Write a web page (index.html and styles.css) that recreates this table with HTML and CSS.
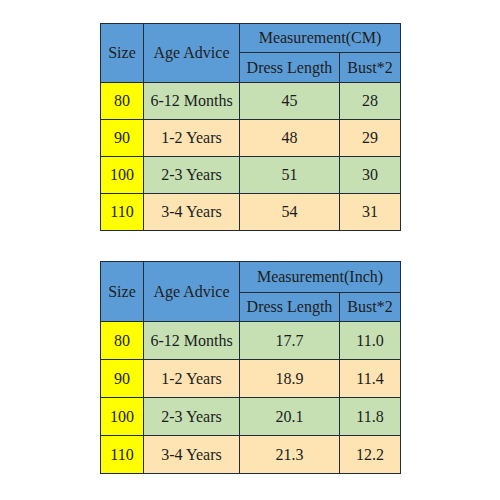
FILE: index.html
```html
<!DOCTYPE html>
<html lang="en">
<head>
    <meta charset="UTF-8">
    <title>Size Chart</title>
    <link rel="stylesheet" href="styles.css">
</head>
<body>
    <div class="page">
        <table class="size-table cm">
            <colgroup>
                <col class="c-size"><col class="c-age"><col class="c-len"><col class="c-bust">
            </colgroup>
            <tr class="head-top">
                <th rowspan="2">Size</th>
                <th rowspan="2">Age Advice</th>
                <th colspan="2">Measurement(CM)</th>
            </tr>
            <tr class="head-sub">
                <th>Dress Length</th>
                <th>Bust*2</th>
            </tr>
            <tr class="green"><td class="size">80</td><td>6-12 Months</td><td>45</td><td>28</td></tr>
            <tr class="peach"><td class="size">90</td><td>1-2 Years</td><td>48</td><td>29</td></tr>
            <tr class="green"><td class="size">100</td><td>2-3 Years</td><td>51</td><td>30</td></tr>
            <tr class="peach"><td class="size">110</td><td>3-4 Years</td><td>54</td><td>31</td></tr>
        </table>

        <table class="size-table inch">
            <colgroup>
                <col class="c-size"><col class="c-age"><col class="c-len"><col class="c-bust">
            </colgroup>
            <tr class="head-top">
                <th rowspan="2">Size</th>
                <th rowspan="2">Age Advice</th>
                <th colspan="2">Measurement(Inch)</th>
            </tr>
            <tr class="head-sub">
                <th>Dress Length</th>
                <th>Bust*2</th>
            </tr>
            <tr class="green"><td class="size">80</td><td>6-12 Months</td><td>17.7</td><td>11.0</td></tr>
            <tr class="peach"><td class="size">90</td><td>1-2 Years</td><td>18.9</td><td>11.4</td></tr>
            <tr class="green"><td class="size">100</td><td>2-3 Years</td><td>20.1</td><td>11.8</td></tr>
            <tr class="peach"><td class="size">110</td><td>3-4 Years</td><td>21.3</td><td>12.2</td></tr>
        </table>
    </div>
</body>
</html>
```

FILE: styles.css
```css
body {
    margin: 0;
    background: #ffffff;
    font-family: "Liberation Serif", "DejaVu Serif", serif;
    color: #1c1c1c;
}
.page {
    padding: 23px 0 0 100px;
    display: flex;
    flex-direction: column;
    gap: 30px;
}
.size-table {
    border-collapse: collapse;
    table-layout: fixed;
    width: 300px;
    font-family: "Liberation Serif", "DejaVu Serif", serif;
    font-size: 16px;
}
.c-size { width: 43px; }
.c-age { width: 96px; }
.c-len { width: 100px; }
.c-bust { width: 61px; }
th, td {
    border: 1px solid #1f2b38;
    padding: 0;
    text-align: center;
    font-weight: normal;
    white-space: nowrap;
    overflow: hidden;
}
th {
    background-color: #5c9cd6;
}
.cm .head-top th { height: 28px; }
.cm .head-sub th { height: 29px; }
.cm td { height: 36px; }
.inch .head-top th { height: 30px; }
.inch .head-sub th { height: 28px; }
.inch td { height: 37px; }
.green td { background-color: #c6e0b4; }
.peach td { background-color: #fde4b2; }
td.size { background-color: #ffff00; }
```
